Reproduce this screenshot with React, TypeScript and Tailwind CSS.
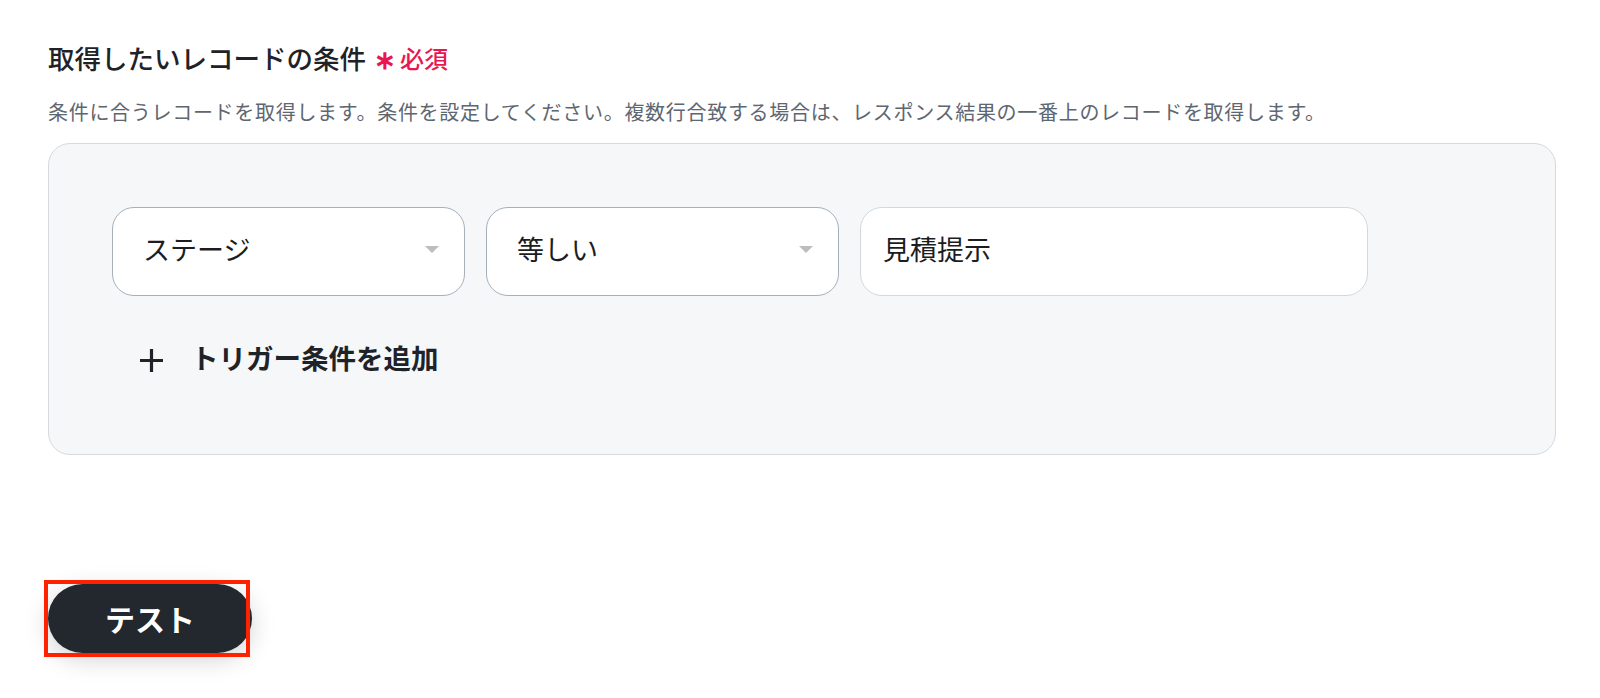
import React from 'react';

const font = { fontFamily: '"Noto Sans CJK JP", "Noto Sans", sans-serif' };

const Caret = () => (
  <svg width="16" height="9" viewBox="0 0 16 9" className="shrink-0">
    <path d="M1 1 L15 1 L8 8 Z" fill="#bdbdbd" />
  </svg>
);

const SelectBox = ({ label }: { label: string }) => (
  <div className="flex h-[89px] w-[353px] items-center justify-between rounded-[22px] border border-[#a5b0bb] bg-white pb-1 pl-[30px] pr-[24px]">
    <span className="text-[27px] text-[#1b1d21]">{label}</span>
    <Caret />
  </div>
);

export default function App() {
  return (
    <div className="min-h-[698px] bg-white pt-10 pr-[44px] pl-12" style={font}>
      <div className="flex items-center">
        <h2 className="text-[26.5px] leading-9 font-medium text-[#1f2328]">取得したいレコードの条件</h2>
        <span className="ml-2 text-[26px] leading-9 font-bold text-[#e8174f]">∗</span>
        <span className="ml-1 text-[24px] leading-9 font-medium text-[#e8174f]">必須</span>
      </div>
      <p className="mt-[21px] text-[20px] leading-[30px] tracking-[0.7px] text-[#5e6670]">
        条件に合うレコードを取得します。条件を設定してください。複数行合致する場合は、レスポンス結果の一番上のレコードを取得します。
      </p>

      <div className="mt-[16px] rounded-[22px] border border-[#d5dadf] bg-[#f5f7f9] pt-[63px] pb-[76px] pl-[63px]">
        <div className="flex gap-[21px]">
          <SelectBox label="ステージ" />
          <SelectBox label="等しい" />
          <div className="flex h-[89px] w-[508px] items-center rounded-[22px] border border-[#d3d8dd] bg-white pb-1 pl-[22px]">
            <span className="text-[27px] text-[#1b1d21]">見積提示</span>
          </div>
        </div>
        <button className="mt-[42px] ml-[27px] flex h-10 items-center text-[#1f2328]">
          <svg width="25" height="25" viewBox="0 0 25 25" className="mt-1">
            <path d="M12.5 1 V24 M1 12.5 H24" stroke="#1f2328" strokeWidth="3.2" />
          </svg>
          <span className="ml-[27px] text-[27.5px] font-bold">トリガー条件を追加</span>
        </button>
      </div>

      <div className="relative mt-[129px] w-fit">
        <button className="flex h-[69px] w-[204px] items-center justify-center rounded-full bg-[#23272e] text-[30px] font-bold text-white shadow-[0_6px_24px_rgba(0,0,0,0.18)]">
          テスト
        </button>
        <div className="pointer-events-none absolute -top-1 -left-1 h-[77px] w-[206px] border-4 border-[#ff2200]" />
      </div>
    </div>
  );
}
